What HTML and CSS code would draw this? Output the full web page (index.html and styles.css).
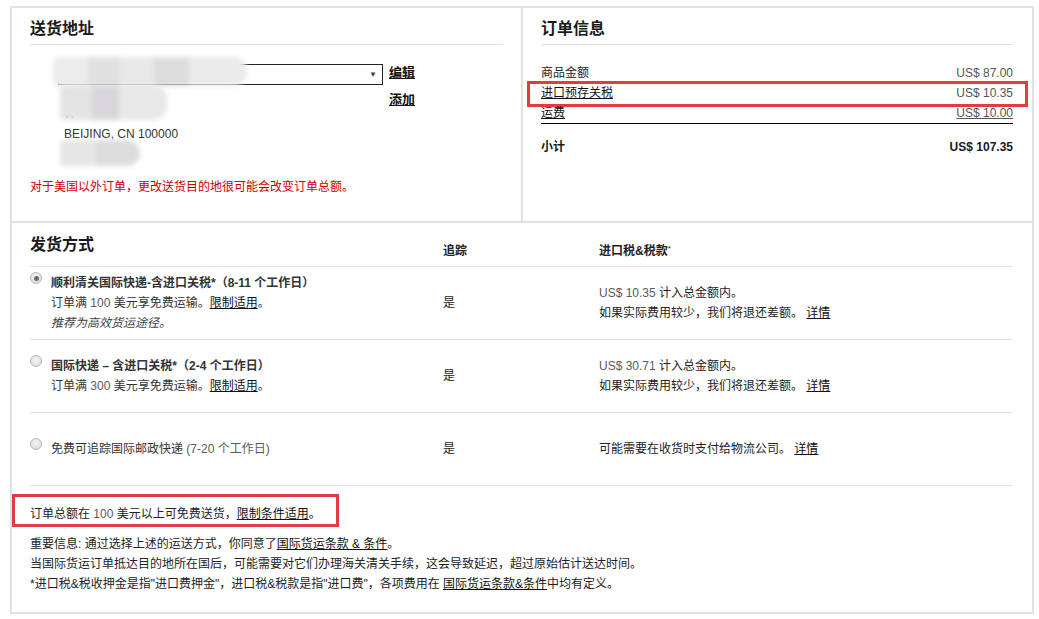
FILE: index.html
```html
<!DOCTYPE html>
<html lang="zh-CN">
<head>
<meta charset="utf-8">
<title>结账</title>
<link rel="stylesheet" href="styles.css">
</head>
<body>
<div class="checkout">
  <div class="top">
    <section class="panel address">
      <h2 class="panel-title">送货地址</h2>
      <div class="addr">
        <div class="addr-main">
          <div class="select"><span class="select-text">I</span><span class="select-arrow">▼</span></div>
          <div class="addr-lines">
            <div>r</div>
            <div>W</div>
            <div>BEIJING, CN 100000</div>
            <div>&nbsp;</div>
          </div>
          <span class="blur b1"></span>
          <span class="blur b2"></span>
          <span class="blur b3"></span>
        </div>
        <div class="addr-actions">
          <a class="action" href="#">编辑</a>
          <a class="action" href="#">添加</a>
        </div>
      </div>
      <p class="warn">对于美国以外订单，更改送货目的地很可能会改变订单总额。</p>
    </section>
    <section class="panel order">
      <h2 class="panel-title">订单信息</h2>
      <div class="order-rows">
        <div class="order-row"><span>商品金额</span><span class="amt">US$ 87.00</span></div>
        <div class="order-row highlight"><a class="link" href="#">进口预存关税</a><span class="amt">US$ 10.35</span></div>
        <div class="order-row last"><a class="link" href="#">运费</a><a class="amt link" href="#">US$ 10.00</a></div>
      </div>
      <div class="subtotal"><span>小计</span><span>US$ 107.35</span></div>
    </section>
  </div>
  <section class="shipping">
    <div class="ship-grid head">
      <h2 class="ship-title">发货方式</h2>
      <div class="col-head">追踪</div>
      <div class="col-head">进口税&amp;税款<sup class="star">*</sup></div>
    </div>
    <div class="ship-grid row">
      <div class="method">
        <span class="radio checked"></span>
        <div class="method-text">
          <div class="m-title">顺利清关国际快递-含进口关税*（8-11 个工作日）</div>
          <div>订单满 <span class="num">100</span> 美元享免费运输。<a class="link" href="#">限制适用</a>。</div>
          <div class="italic">推荐为高效货运途径。</div>
        </div>
      </div>
      <div class="track">是</div>
      <div class="tax">
        <div><span class="num">US$ 10.35</span> 计入总金额内。</div>
        <div>如果实际费用较少，我们将退还差额。 <a class="link" href="#">详情</a></div>
      </div>
    </div>
    <div class="ship-grid row">
      <div class="method">
        <span class="radio"></span>
        <div class="method-text">
          <div class="m-title">国际快递 – 含进口关税*（2-4 个工作日）</div>
          <div>订单满 <span class="num">300</span> 美元享免费运输。<a class="link" href="#">限制适用</a>。</div>
        </div>
      </div>
      <div class="track">是</div>
      <div class="tax">
        <div><span class="num">US$ 30.71</span> 计入总金额内。</div>
        <div>如果实际费用较少，我们将退还差额。 <a class="link" href="#">详情</a></div>
      </div>
    </div>
    <div class="ship-grid row">
      <div class="method">
        <span class="radio"></span>
        <div class="method-text">
          <div>免费可追踪国际邮政快递 <span class="num">(7-20 个工作日)</span></div>
        </div>
      </div>
      <div class="track">是</div>
      <div class="tax">
        <div>可能需要在收货时支付给物流公司。 <a class="link" href="#">详情</a></div>
      </div>
    </div>
    <div class="free-note">订单总额在 <span class="num">100</span> 美元以上可免费送货，<a class="link" href="#">限制条件适用</a>。</div>
    <div class="notes">
      <p>重要信息: 通过选择上述的运送方式，你同意了<a class="link" href="#">国际货运条款 &amp; 条件</a>。</p>
      <p>当国际货运订单抵达目的地所在国后，可能需要对它们办理海关清关手续，这会导致延迟，超过原始估计送达时间。</p>
      <p>*进口税&amp;税收押金是指&quot;进口费押金&quot;，进口税&amp;税款是指&quot;进口费&quot;，各项费用在 <a class="link" href="#">国际货运条款&amp;条件</a>中均有定义。</p>
    </div>
  </section>
</div>
</body>
</html>
```

FILE: styles.css
```css
* { box-sizing: border-box; }
html, body { margin: 0; padding: 0; background: #fff; }
body {
  font-family: "Liberation Sans", "Noto Sans CJK SC", Arial, sans-serif;
  font-size: 12px;
  line-height: 20px;
  color: #222;
}
p { margin: 0; }
a { color: #111; }

.checkout {
  margin: 6px 0 0 10px;
  width: 1024px;
  border: 2px solid #e2e2e2;
}

.top {
  display: grid;
  grid-template-columns: 511px 509px;
  height: 215px;
  border-bottom: 2px solid #e2e2e2;
}

.panel { padding: 10px 18px 0 18px; }
.panel.address { border-right: 2px solid #e2e2e2; }
.panel.order { padding-right: 19px; }

.panel-title {
  margin: 0;
  font-size: 16px;
  line-height: 20px;
  font-weight: bold;
  color: #1a1a1a;
  padding-top: 1px;
  padding-bottom: 5px;
  border-bottom: 1px solid #e0e0e0;
}

/* address */
.addr {
  display: flex;
  margin-top: 19px;
}
.addr-main {
  position: relative;
  margin-left: 28px;
  width: 325px;
}
.select {
  height: 21px;
  border: 1px solid #222;
  display: flex;
  align-items: center;
  justify-content: space-between;
  padding: 0 5px 0 1px;
  background: #fff;
  color: #333;
}
.select-text { font-size: 12px; line-height: 18px; }
.select-arrow { font-size: 8px; line-height: 10px; color: #444; }
.addr-lines {
  margin-top: -2px;
  padding-left: 6px;
  line-height: 20.5px;
  color: #333;
}
.blur {
  position: absolute;
  display: block;
  filter: blur(2.5px);
  background:
    linear-gradient(90deg, #ececec 0 18%, #e0e0e0 18% 34%, #e8e8e8 34% 52%, #dcdcdc 52% 70%, #eaeaea 70% 100%);
  border-radius: 4px 14px 14px 4px;
}
.b1 { left: -5px; top: -7px; width: 194px; height: 29px; }
.b2 { left: 2px; top: 21px; width: 107px; height: 35px;
  background: linear-gradient(90deg, #e4e4e4 0 30%, #d8d6da 30% 55%, #e8e8e8 55% 100%); }
.b3 { left: 2px; top: 76px; width: 80px; height: 26px;
  background: linear-gradient(90deg, #e6e6e6 0 45%, #dcdcdc 45% 100%); }

.addr-actions {
  display: flex;
  flex-direction: column;
  gap: 7px;
  margin-left: 6px;
  margin-top: -1px;
}
.action {
  font-size: 13px;
  font-weight: bold;
  line-height: 20px;
  color: #111;
  text-decoration: underline;
}

.warn {
  margin-top: 12px;
  color: #cc0000;
}

/* order info */
.order-rows { margin-top: 18px; }
.order-row {
  position: relative;
  display: flex;
  justify-content: space-between;
  line-height: 20px;
}
.order-row.last { border-bottom: 1px solid #000; }
.order-row.highlight::after {
  content: "";
  position: absolute;
  left: -14px;
  right: -15px;
  top: -2px;
  bottom: -4px;
  border: 3px solid #e23c40;
  pointer-events: none;
}
.amt { color: #555; }
a.amt { color: #555; }
.link { color: #111; text-decoration: underline; }
.subtotal {
  display: flex;
  justify-content: space-between;
  margin-top: 13px;
  font-weight: bold;
  color: #1a1a1a;
}

/* shipping */
.shipping { padding: 0 20px 18px 18px; }
.ship-grid {
  display: grid;
  grid-template-columns: 413px 156px 1fr;
  border-bottom: 1px solid #e0e0e0;
}
.ship-grid.head { height: 44px; align-items: start; }
.ship-title {
  margin: 0;
  padding-top: 12px;
  font-size: 16px;
  line-height: 20px;
  font-weight: bold;
  color: #1a1a1a;
}
.col-head {
  padding-top: 18px;
  font-weight: bold;
  color: #222;
}
.star { font-size: 8px; line-height: 0; vertical-align: 4px; font-weight: normal; }

.ship-grid.row { height: 73px; align-items: center; }
.method { display: flex; align-items: flex-start; gap: 9px; }
.method-text { color: #333; }
.m-title { font-weight: bold; color: #333; }
.italic { font-style: italic; color: #444; }
.num { color: #5a5a5a; }
.track, .tax { color: #222; }

.radio {
  flex: none;
  width: 12px;
  height: 12px;
  margin-top: -1px;
  border-radius: 50%;
  border: 1px solid #b9b9b9;
  background: radial-gradient(circle at 50% 40%, #f6f6f6 0, #e0e0e0 70%, #d4d4d4 100%);
  position: relative;
}
.radio.checked::after {
  content: "";
  position: absolute;
  left: 2.5px;
  top: 2.5px;
  width: 5px;
  height: 5px;
  border-radius: 50%;
  background: #6a6a6a;
}

.free-note {
  display: inline-block;
  margin: 8px 0 0 -18px;
  border: 3px solid #e23c40;
  padding: 7px 15px 0 15px;
  line-height: 20px;
  color: #222;
}
.notes { margin-top: 7px; color: #222; }
```
